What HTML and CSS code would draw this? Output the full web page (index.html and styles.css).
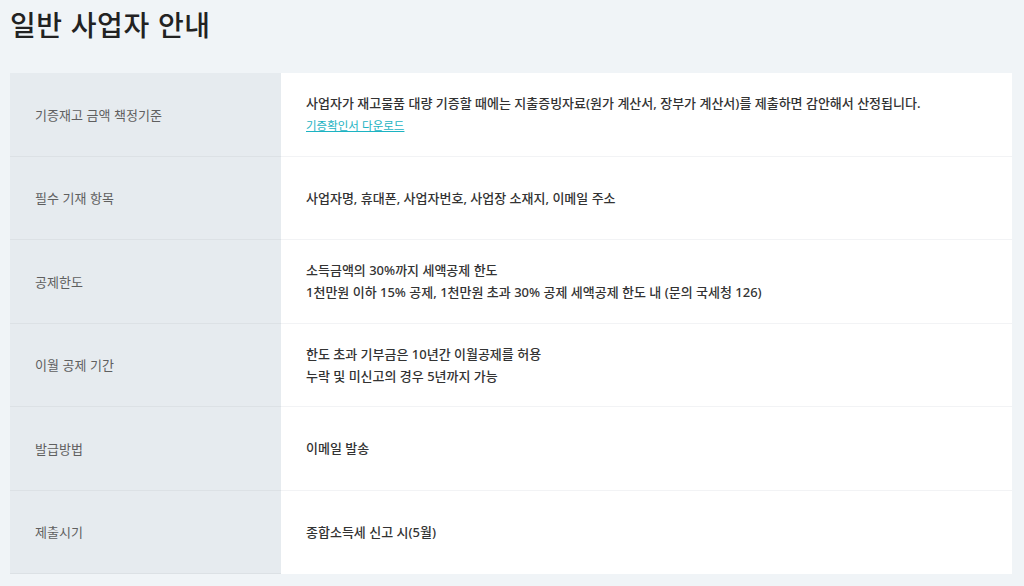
FILE: index.html
```html
<!DOCTYPE html>
<html lang="ko">
<head>
  <meta charset="utf-8">
  <title>일반 사업자 안내</title>
  <link rel="stylesheet" href="styles.css">
</head>
<body>
  <h1 class="page-title">일반 사업자 안내</h1>

  <div class="info-table">
    <div class="info-row">
      <div class="info-label">기증재고 금액 책정기준</div>
      <div class="info-value">
        <p>사업자가 재고물품 대량 기증할 때에는 지출증빙자료(원가 계산서, 장부가 계산서)를 제출하면 감안해서 산정됩니다.</p>
        <a class="download-link" href="#">기증확인서 다운로드</a>
      </div>
    </div>
    <div class="info-row">
      <div class="info-label">필수 기재 항목</div>
      <div class="info-value">
        <p>사업자명, 휴대폰, 사업자번호, 사업장 소재지, 이메일 주소</p>
      </div>
    </div>
    <div class="info-row">
      <div class="info-label">공제한도</div>
      <div class="info-value">
        <p>소득금액의 30%까지 세액공제 한도</p>
        <p>1천만원 이하 15% 공제, 1천만원 초과 30% 공제 세액공제 한도 내 (문의 국세청 126)</p>
      </div>
    </div>
    <div class="info-row">
      <div class="info-label">이월 공제 기간</div>
      <div class="info-value">
        <p>한도 초과 기부금은 10년간 이월공제를 허용</p>
        <p>누락 및 미신고의 경우 5년까지 가능</p>
      </div>
    </div>
    <div class="info-row">
      <div class="info-label">발급방법</div>
      <div class="info-value">
        <p>이메일 발송</p>
      </div>
    </div>
    <div class="info-row">
      <div class="info-label">제출시기</div>
      <div class="info-value">
        <p>종합소득세 신고 시(5월)</p>
      </div>
    </div>
  </div>
</body>
</html>
```

FILE: styles.css
```css
/* Page */
body {
  margin: 0;
  background-color: #f0f4f7;
  font-family: "Noto Sans CJK KR", "Noto Sans", sans-serif;
  color: #333;
}

/* Title */
.page-title {
  margin: 0;
  padding: 3px 10px 0;
  height: 73px;
  box-sizing: border-box;
  font-size: 28px;
  font-weight: 500;
  line-height: 42px;
  color: #222;
  letter-spacing: 0.5px;
}

/* Table */
.info-table {
  margin-left: 10px;
  width: 1002px;
}

.info-row {
  display: grid;
  grid-template-columns: 271px 1fr;
  height: 83.5px;
}

.info-label {
  display: flex;
  align-items: center;
  padding-left: 25px;
  background-color: #e6ebef;
  border-bottom: 1px solid #dce1e5;
  font-size: 13px;
  color: #5f5f5f;
}

.info-value {
  display: flex;
  flex-direction: column;
  justify-content: center;
  padding-left: 25px;
  background-color: #fff;
  border-bottom: 1px solid #f2f3f5;
  font-family: "Noto Sans", "Noto Sans CJK KR", sans-serif;
  font-size: 13px;
  font-weight: 500;
  line-height: 22px;
}

.info-row:last-child .info-value {
  border-bottom-color: #fff;
}

.info-value p {
  margin: 0;
}

.download-link {
  font-family: "Noto Sans CJK KR", sans-serif;
  font-size: 11.5px;
  font-weight: 400;
  color: #1cb3c2;
  align-self: flex-start;
}
```
